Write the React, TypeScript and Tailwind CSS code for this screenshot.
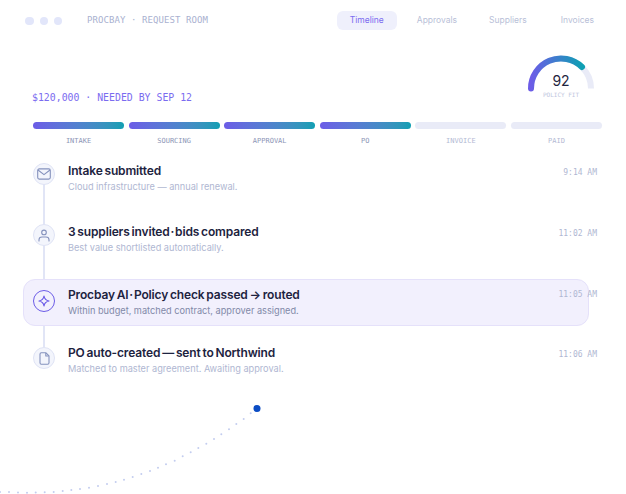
const MONO = "font-['DejaVu_Sans_Mono',monospace]";
const TITLE = "mt-[1px] text-[12px] leading-[14px] font-semibold tracking-[-0.15px] [word-spacing:-1px] text-[#1d2340]";
const DESC = "mt-[2px] text-[9.200px] leading-[14px]";

const dots: [number, number][] = [[0,492],[9,492],[18,492.5],[27,492.7],[35.7,492.5],[44.7,492.3],[53.7,492],[62.7,491],[71.3,490],[80,489],[89,487.7],[98,486],[107,484],[115.7,482],[124,479.7],[132.7,477],[141.3,474],[150,471],[158,467.7],[166,464.3],[174.7,460.7],[182.7,456.3],[190.7,452.3],[198.3,448],[206.3,443.7],[214,439],[221.3,434.3],[229,429.3],[236.3,424],[243.7,419],[250.7,413.3]];

function Circle({ active, children }: { active?: boolean; children: React.ReactNode }) {
  return (
    <div className={active
      ? "w-[22px] h-[22px] rounded-full flex items-center justify-center shrink-0 bg-[#f2f0fd] border border-[#6c5ce7]"
      : "w-[22px] h-[22px] rounded-full flex items-center justify-center shrink-0 bg-[#f3f5fc] border border-[#dfe3f5]"}>
      {children}
    </div>
  );
}

const Mail = () => (
  <svg width="14" height="12" viewBox="0 0 14 12" fill="none" stroke="#8592bd" strokeWidth="1.1" strokeLinejoin="round">
    <rect x="0.7" y="0.9" width="12.6" height="10.2" rx="1.6" />
    <path d="M1 2l6 4.6L13 2" />
  </svg>
);
const User = () => (
  <svg width="12" height="13" viewBox="0 0 12 13" fill="none" stroke="#8592bd" strokeWidth="1.1" strokeLinecap="round">
    <circle cx="6" cy="3.4" r="2.3" />
    <path d="M1 12v-1.2c0-1.7 1.3-2.8 3-2.8h4c1.7 0 3 1.1 3 2.8V12" />
  </svg>
);
const Spark = () => (
  <svg width="12" height="12" viewBox="0 0 12 12" fill="none" stroke="#6c5ce7" strokeWidth="1.2" strokeLinejoin="round">
    <path d="M6 1c.5 3 1.9 4.500 5 5-3.100.5-4.500 2-5 5-.5-3-1.900-4.500-5-5 3.100-.5 4.500-2 5-5z" />
  </svg>
);
const FileIcon = () => (
  <svg width="11" height="13" viewBox="0 0 11 13" fill="none" stroke="#8592bd" strokeWidth="1.1" strokeLinejoin="round">
    <path d="M1 2.200C1 1.400 1.500.8 2.300.8H7l3 3v7c0 .8-.6 1.400-1.400 1.400H2.300c-.8 0-1.300-.6-1.300-1.400z" />
    <path d="M6.800 1v3h3" />
  </svg>
);

const stages = [
  { label: "INTAKE", on: true },
  { label: "SOURCING", on: true },
  { label: "APPROVAL", on: true },
  { label: "PO", on: true },
  { label: "INVOICE", on: false },
  { label: "PAID", on: false },
];

export default function App() {
  return (
    <div className="relative w-[626px] h-[494px] overflow-hidden bg-white font-['Inter',sans-serif]">
      <header className="flex items-center h-[19px] mt-[11px] ml-[25px] mr-[32px]">
        <div className="flex gap-[6px]">
          <span className="w-[9px] h-[8px] rounded-full bg-[#e2e6fa]" />
          <span className="w-[8px] h-[8px] rounded-full bg-[#e2e6fa]" />
          <span className="w-[8px] h-[8px] rounded-full bg-[#e2e6fa]" />
        </div>
        <span className={`${MONO} ml-[25px] text-[9px] tracking-[0.08px] text-[#a9b1d0]`}>PROCBAY · REQUEST ROOM</span>
        <nav className="ml-auto flex items-center text-[8.500px] text-[#b9bfd8]">
          <span className="w-[60px] h-[19px] flex items-center justify-center rounded-[6px] bg-[#eff0fc] text-[#7b6cf0]">Timeline</span>
          <span className="ml-[20px]">Approvals</span>
          <span className="ml-[32px]">Suppliers</span>
          <span className="ml-[34px]">Invoices</span>
        </nav>
      </header>

      <div className="flex items-start justify-between ml-[32px] mr-[32px] mt-[25px] h-[70px]">
        <div className={`${MONO} mt-[37px] text-[9.850px] leading-[12px] text-[#7b6cf0]`}>$120,000 · NEEDED BY SEP 12</div>
        <div className="relative w-[66px] h-[46px]">
          <svg width="70" height="42" viewBox="0 0 70 42" className="absolute -left-[2px] -top-[1px]" fill="none">
            <defs>
              <linearGradient id="g" x1="0" y1="0" x2="1" y2="0">
                <stop offset="0" stopColor="#6c5ce7" />
                <stop offset="1" stopColor="#0e9fb3" />
              </linearGradient>
            </defs>
            <path d="M5 34.500A30 30 0 0 1 65 34.500" stroke="#e9ebf7" strokeWidth="6" />
            <path d="M5 34.500A30 30 0 0 1 56 13" stroke="url(#g)" strokeWidth="6" strokeLinecap="round" />
          </svg>
          <span className="absolute left-0 right-0 top-[17px] text-center text-[14px] leading-[18px] text-[#1f2540]">92</span>
          <span className={`${MONO} absolute left-0 right-0 top-[36px] text-center text-[6px] leading-[8px] text-[#c0c6de]`}>POLICY FIT</span>
        </div>
      </div>

      <div className="flex gap-[4.500px] ml-[33px] mr-[24px] -mt-[3px]">
        {stages.map((s) => (
          <div key={s.label} className="flex-1 flex flex-col items-center">
            <div className={s.on
              ? "w-full h-[7px] rounded-full bg-gradient-to-r from-[#6c5ce7] to-[#0e9fb3]"
              : "w-full h-[7px] rounded-full bg-[#e9ebf7]"} />
            <span className={`${MONO} mt-[7px] text-[7px] leading-[10px] ${s.on ? "text-[#8d96b6]" : "text-[#b3b9d4]"}`}>{s.label}</span>
          </div>
        ))}
      </div>

      <div className="relative ml-[23px] mr-[29px] mt-[17px]">
        <span className="absolute left-[20px] top-[11px] w-[2px] h-[173px] bg-[#e1e5f6]" />

        <div className="relative flex items-start h-[61px] pl-[10px]">
          <Circle><Mail /></Circle>
          <div className="ml-[13px] flex-1 min-w-0">
            <div className={TITLE}>Intake submitted</div>
            <div className={`${DESC} text-[#b0b7d2]`}>Cloud infrastructure — annual renewal.</div>
          </div>
          <span className={`${MONO} mt-[5px] text-[8px] leading-[10px] text-[#b0b7d2]`}>9:14 AM</span>
        </div>

        <div className="relative flex items-start h-[55px] pl-[10px]">
          <Circle><User /></Circle>
          <div className="ml-[13px] flex-1 min-w-0">
            <div className={TITLE}>3 suppliers invited<span className="[word-spacing:-2px]"> · </span>bids compared</div>
            <div className={`${DESC} text-[#b0b7d2]`}>Best value shortlisted automatically.</div>
          </div>
          <span className={`${MONO} mt-[5px] text-[8px] leading-[10px] text-[#b0b7d2]`}>11:02 AM</span>
        </div>

        <div className="relative flex items-start h-[47px] mb-[21px] pl-[10px] pt-[8px]">
          <span className="absolute left-0 top-0 bottom-0 w-[566px] rounded-[12px] bg-[#f2f0fd] border border-[#e5e1fa]" />
          <div className="relative mt-[3px]"><Circle active><Spark /></Circle></div>
          <div className="relative ml-[13px] flex-1 min-w-0">
            <div className={TITLE}>Procbay AI<span className="[word-spacing:-2px]"> · </span>Policy check passed → routed</div>
            <div className={`${DESC} text-[#8189a8]`}>Within budget, matched contract, approver assigned.</div>
          </div>
          <span className={`${MONO} relative mt-[3px] text-[8px] leading-[10px] text-[#b0b7d2]`}>11:05 AM</span>
        </div>

        <div className="relative flex items-start pl-[10px]">
          <Circle><FileIcon /></Circle>
          <div className="ml-[13px] flex-1 min-w-0">
            <div className="-mt-[1px] text-[12px] leading-[14px] font-semibold tracking-[-0.15px] [word-spacing:-1px] text-[#1d2340]">PO auto-created — sent to Northwind</div>
            <div className={`${DESC} text-[#b0b7d2]`}>Matched to master agreement. Awaiting approval.</div>
          </div>
          <span className={`${MONO} mt-[3px] text-[8px] leading-[10px] text-[#b0b7d2]`}>11:06 AM</span>
        </div>
      </div>

      <svg width="626" height="494" viewBox="0 0 626 494" className="absolute left-0 top-0 pointer-events-none">
        {dots.map(([x, y]) => (
          <circle key={x} cx={x} cy={y} r="1" fill="#c3cdef" />
        ))}
        <circle cx="257" cy="408.500" r="3.500" fill="#0b4cc4" />
      </svg>
    </div>
  );
}
